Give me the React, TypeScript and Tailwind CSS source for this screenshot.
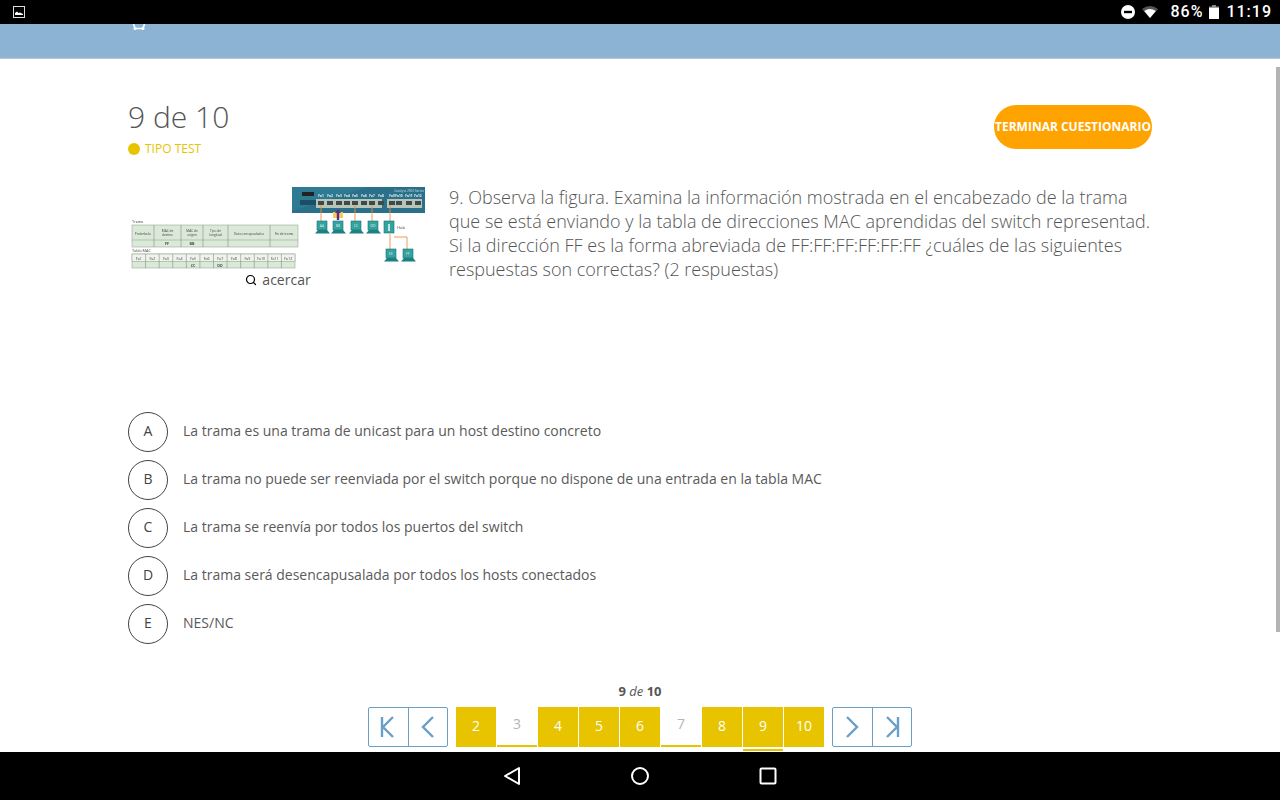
import { Search } from "lucide-react"

const OPTIONS = [
  { letter: "A", text: "La trama es una trama de unicast para un host destino concreto" },
  { letter: "B", text: "La trama no puede ser reenviada por el switch porque no dispone de una entrada en la tabla MAC" },
  { letter: "C", text: "La trama se reenvía por todos los puertos del switch" },
  { letter: "D", text: "La trama será desencapusalada por todos los hosts conectados" },
  { letter: "E", text: "NES/NC" },
]

// filled = answered, current gets the underline below the cell
const PAGES = [
  { n: 2, filled: true },
  { n: 3, filled: false },
  { n: 4, filled: true },
  { n: 5, filled: true },
  { n: 6, filled: true },
  { n: 7, filled: false },
  { n: 8, filled: true },
  { n: 9, filled: true, current: true },
  { n: 10, filled: true },
]

function StatusBar() {
  return (
    <div className="h-6 shrink-0 bg-black flex items-center justify-between pl-[13px] pr-2 text-white font-['Roboto',sans-serif]">
      <svg width="12" height="12" viewBox="0 0 12 12">
        <rect x="0.5" y="0.5" width="11" height="11" fill="none" stroke="#ddd" strokeWidth="1" />
        <path d="M2 9 V7 L4 5.5 L5.5 7 L7 6.5 L10 8 V9 Z" fill="#fff" />
      </svg>
      <div className="flex items-center">
        <svg width="14" height="14" viewBox="0 0 14 14" className="mr-[7px]">
          <circle cx="7" cy="7" r="7" fill="#fff" />
          <rect x="3" y="5.8" width="8" height="2.4" fill="#000" />
        </svg>
        <svg width="16" height="12" viewBox="0 0 16 12" className="mr-[12px]">
          <path d="M0 3 Q8 -3 16 3 L8 12 Z" fill="#555" />
          <path d="M2.2 5 Q8 1 13.8 5 L8 12 Z" fill="#fff" />
        </svg>
        <span className="text-[16px] leading-6 font-medium tracking-[1px] mr-[6px]">86%</span>
        <svg width="10" height="14" viewBox="0 0 10 14" className="mr-[7px]">
          <rect x="3" y="0" width="4" height="2" fill="#888" />
          <rect x="0" y="1.5" width="10" height="1" fill="#888" />
          <rect x="0" y="2.5" width="10" height="11.5" fill="#fff" />
        </svg>
        <span className="text-[16px] leading-6 font-medium tracking-[1px]">11:19</span>
      </div>
    </div>
  )
}

function Computer({ x, y, label }: { x: number; y: number; label: string }) {
  return (
    <g>
      <rect x={x} y={y} width="10" height="9" fill="#34a3a0" stroke="#1d6f70" strokeWidth="0.6" />
      <text x={x + 5} y={y + 6} fontSize="3.5" fill="#cfeeee" textAnchor="middle">
        {label}
      </text>
      <path d={`M${x - 2} ${y + 12.5} L${x + 1} ${y + 9} H${x + 10} L${x + 13} ${y + 12.5} Z`} fill="#1c7f80" />
    </g>
  )
}

function NetworkFigure() {
  const frameCols = [4, 26, 53, 75, 100, 142, 170]
  const frameHeads = [["Preámbulo"], ["MAC de", "destino"], ["MAC de", "origen"], ["Tipo de", "longitud"], ["Datos encapsulados"], ["Fin de trama"]]
  const macCols = Array.from({ length: 13 }, (_, i) => 4 + (i * 163) / 12)
  const macHeads = ["Fa1", "Fa2", "Fa3", "Fa4", "Fa5", "Fa6", "Fa7", "Fa8", "Fa9", "Fa10", "Fa11", "Fa12"]
  const ports = [193, 202, 211, 219, 227, 236, 244, 253, 264, 271, 281, 290]

  return (
    <svg width="300" height="86" viewBox="0 0 300 86" className="block blur-[0.4px] font-['Open_Sans',sans-serif]">
      {/* switch */}
      <path d="M164 2 H297 V28 H164 Z" fill="#2f7a93" />
      <path d="M240 2 H297 V28 H164 V26 Z" fill="#276680" opacity="0.5" />
      <rect x="174" y="7" width="12" height="4" fill="#222" />
      <rect x="172" y="15" width="16" height="5" fill="#1c4f63" />
      <text x="296" y="6.5" fontSize="3.2" fill="#c8dde4" textAnchor="end">Catalyst 2950 Series</text>
      {ports.map((p, i) => (
        <text key={p} x={p} y="12" fontSize="3.2" fontWeight="700" fill="#e6f0f3" textAnchor="middle">
          Fa{i + 1}
        </text>
      ))}
      <rect x="188" y="14" width="66" height="9" fill="#b9c4b8" />
      <rect x="259" y="14" width="35" height="9" fill="#b9c4b8" />
      {ports.map((p) => (
        <rect key={p} x={p - 3} y="16" width="6" height="4" fill="#3c4a4a" />
      ))}
      {/* cables */}
      <g stroke="#ee8f3a" strokeWidth="0.9" fill="none">
        <path d="M193 20 V36" />
        <path d="M227 20 V36" />
        <path d="M244 20 V36" />
        <path d="M262 20 V37" />
        <path d="M262 49 V64" />
        <path d="M266 52 H279 V64" />
      </g>
      <rect x="205" y="27" width="10" height="6" fill="#f0cf5c" />
      <path d="M210 24 L213 28 H211.2 V35 H208.8 V28 H207 Z" fill="#5b2a8c" />
      <Computer x={189} y={36} label="AA" />
      <Computer x={205} y={36} label="BB" />
      <Computer x={223} y={36} label="CC" />
      <Computer x={240} y={36} label="DD" />
      <rect x="256" y="36" width="10" height="12" fill="#34a3a0" stroke="#1d6f70" strokeWidth="0.6" />
      <rect x="260" y="39" width="2" height="7" fill="#bfe6e6" />
      <text x="269" y="44" fontSize="4" fill="#444">Hub</text>
      <Computer x={258} y={64} label="EE" />
      <Computer x={275} y={64} label="FF" />

      {/* frame table */}
      <text x="4" y="38" fontSize="3.8" fill="#444">Trama</text>
      <rect x="4" y="40" width="166" height="22" fill="#dbe9d8" stroke="#8a9a88" strokeWidth="0.5" />
      <path d="M4 55 H170" stroke="#8a9a88" strokeWidth="0.5" />
      {frameCols.slice(1, -1).map((c) => (
        <path key={c} d={`M${c} 40 V62`} stroke="#6f806e" strokeWidth="0.5" />
      ))}
      {frameHeads.map((lines, i) => (
        <text key={lines[0] + i} x={(frameCols[i] + frameCols[i + 1]) / 2} y={lines.length > 1 ? 47 : 50} fontSize="3.2" fill="#444" textAnchor="middle">
          {lines.map((l, j) => (
            <tspan key={l} x={(frameCols[i] + frameCols[i + 1]) / 2} dy={j ? 4 : 0}>
              {l}
            </tspan>
          ))}
        </text>
      ))}
      <text x="39" y="60" fontSize="3.6" fontWeight="700" fill="#444" textAnchor="middle">FF</text>
      <text x="64" y="60" fontSize="3.6" fontWeight="700" fill="#444" textAnchor="middle">BB</text>

      {/* mac table */}
      <text x="4" y="67" fontSize="3.8" fill="#444">Tabla MAC</text>
      <rect x="4" y="69" width="163" height="14" fill="#dbe9d8" stroke="#8a9a88" strokeWidth="0.5" />
      <rect x="4" y="69" width="163" height="7.5" fill="#eef3ec" stroke="#8a9a88" strokeWidth="0.5" />
      {macCols.slice(1, -1).map((c) => (
        <path key={c} d={`M${c} 69 V83`} stroke="#6f806e" strokeWidth="0.5" />
      ))}
      {macHeads.map((h, i) => (
        <text key={h} x={macCols[i] + 6.8} y="74.5" fontSize="3.6" fill="#444" textAnchor="middle">
          {h}
        </text>
      ))}
      <text x="65" y="81.5" fontSize="3.6" fontWeight="700" fill="#444" textAnchor="middle">CC</text>
      <text x="92" y="81.5" fontSize="3.6" fontWeight="700" fill="#444" textAnchor="middle">DD</text>
    </svg>
  )
}

function NavButton({ d, border }: { d: string; border?: boolean }) {
  return (
    <div className={`w-10 h-full flex items-center justify-center ${border ? "border-l border-[#6a9fc8]" : ""}`}>
      <svg width="20" height="22" viewBox="0 0 20 22" fill="none" stroke="#6a9fc8" strokeWidth="2.4">
        <path d={d} />
      </svg>
    </div>
  )
}

function Pagination() {
  return (
    <div className="flex justify-center items-start h-[45px]">
      <div className="flex w-20 h-10 box-border border border-[#6a9fc8] rounded-[2px] mr-2">
        <NavButton d="M4 1 V21 M15 1 L5 11 L15 21" />
        <NavButton border d="M15 1 L5 11 L15 21" />
      </div>
      <div className="flex gap-px">
        {PAGES.map((p) =>
          p.filled ? (
            <div key={p.n} className="w-10 h-[45px] flex flex-col">
              <div className="h-10 bg-[#e8c300] text-white text-sm flex items-center justify-center pb-0.5">{p.n}</div>
              {p.current && <div className="h-0.5 mt-0.5 bg-[#e8c300]" />}
            </div>
          ) : (
            <div
              key={p.n}
              className="w-10 h-10 box-border border-b-2 border-[#e8c300] text-[#b5b5b5] text-sm flex items-center justify-center pb-1"
            >
              {p.n}
            </div>
          ),
        )}
      </div>
      <div className="flex w-20 h-10 box-border border border-[#6a9fc8] rounded-[2px] ml-2">
        <NavButton d="M5 1 L15 11 L5 21" />
        <NavButton border d="M5 1 L15 11 L5 21 M16 1 V21" />
      </div>
    </div>
  )
}

function NavigationBar() {
  return (
    <div className="h-12 shrink-0 bg-black flex items-center justify-center gap-[106px]">
      <svg width="22" height="22" viewBox="0 0 22 22" fill="none" stroke="#fff" strokeWidth="2" strokeLinejoin="round">
        <path d="M18 3 V19 L4 11 Z" />
      </svg>
      <svg width="22" height="22" viewBox="0 0 22 22" fill="none" stroke="#fff" strokeWidth="2">
        <circle cx="11" cy="11" r="8" />
      </svg>
      <svg width="22" height="22" viewBox="0 0 22 22" fill="none" stroke="#fff" strokeWidth="2" strokeLinejoin="round">
        <rect x="3.5" y="3.5" width="15" height="15" rx="1" />
      </svg>
    </div>
  )
}

export default function App() {
  return (
    <div className="w-[1280px] h-[800px] overflow-hidden flex flex-col bg-white font-['Open_Sans',sans-serif] text-[#555]">
      <StatusBar />
      <div className="h-[35px] shrink-0 bg-[#8cb3d4] border-b border-[#b9c6d2] pl-[132px]">
        <svg width="14" height="6" viewBox="0 0 14 6" className="block">
          <path d="M1.5 0 L3 4.5 H11 L12.5 0" fill="none" stroke="#fff" strokeWidth="1.6" />
          <circle cx="3" cy="4.5" r="1.5" fill="#fff" />
          <circle cx="11" cy="4.5" r="1.5" fill="#fff" />
        </svg>
      </div>

      <main className="relative flex-1 min-h-0 px-32 pt-[40px]">
        <div className="absolute right-0 top-[8px] w-1 h-[565px] bg-[#b4b4b4]" />

        <div className="flex justify-between items-start h-[86px]">
          <div>
            <div className="text-[30px] leading-9 font-light">9 de 10</div>
            <div className="flex items-center mt-[5px] text-xs leading-[18px] text-[#e8c300]">
              <span className="w-3 h-3 rounded-full bg-[#e8c300] mr-[5px]" />
              TIPO TEST
            </div>
          </div>
          <button className="w-[158px] h-11 mt-[6px] rounded-full bg-[#ffa300] text-white text-xs font-bold whitespace-nowrap flex items-center justify-center">
            TERMINAR CUESTIONARIO
          </button>
        </div>

        <div className="flex h-[227px]">
          <div className="w-[321px] shrink-0">
            <NetworkFigure />
            <div className="flex items-center justify-center w-[300px] -mt-px text-sm leading-5 text-[#555]">
              <Search size={12} strokeWidth={2.4} className="text-black mr-[5px]" />
              acercar
            </div>
          </div>
          <p className="text-[18px] leading-6 font-light text-[#555]">
            9. Observa la figura. Examina la información mostrada en el encabezado de la trama que se está enviando y la
            tabla de direcciones MAC aprendidas del switch representad. Si la dirección FF es la forma abreviada de
            FF:FF:FF:FF:FF:FF ¿cuáles de las siguientes respuestas son correctas? (2 respuestas)
          </p>
        </div>

        <div className="flex flex-col gap-2">
          {OPTIONS.map((o) => (
            <div key={o.letter} className="flex items-center h-10">
              <div className="w-10 h-10 box-border rounded-full border border-[#444] flex items-center justify-center pb-0.5 text-sm font-medium text-[#444] mr-[15px]">
                {o.letter}
              </div>
              <span className="text-sm text-[#5a5a5a] pb-0.5">{o.text}</span>
            </div>
          ))}
        </div>

        <div className="text-center text-[13px] leading-[18px] mt-[38px] mb-[7px]">
          <b>9</b> <i>de</i> <b>10</b>
        </div>
        <Pagination />
      </main>

      <NavigationBar />
    </div>
  )
}
